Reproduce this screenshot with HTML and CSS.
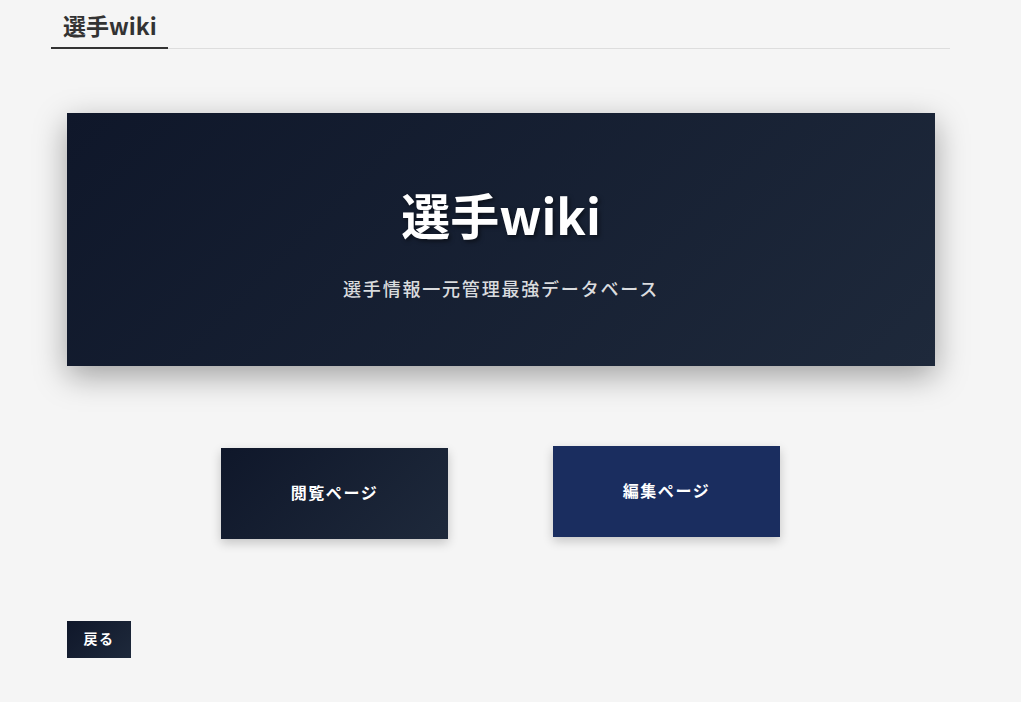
FILE: index.html
```html
<!DOCTYPE html>
<html lang="ja">
<head>
    <meta charset="UTF-8">
    <meta name="viewport" content="width=device-width, initial-scale=1.0">
    <title>選手wiki</title>
    <link rel="stylesheet" href="styles.css">
</head>
<body>
    <div class="page">
        <div class="header">
            <div class="header-tab">選手wiki</div>
        </div>

        <div class="hero">
            <h1 class="hero-title">選手wiki</h1>
            <p class="hero-sub">選手情報一元管理最強データベース</p>
        </div>

        <div class="menu">
            <a class="menu-btn view" href="#">閲覧ページ</a>
            <a class="menu-btn edit" href="#">編集ページ</a>
        </div>

        <a class="back-btn" href="#">戻る</a>
    </div>
</body>
</html>
```

FILE: styles.css
```css
body {
    margin: 0;
    background-color: #f5f5f5;
    font-family: "Noto Sans CJK JP", "Noto Sans", sans-serif;
}
.page {
    width: 899px;
    margin-left: 51px;
}
.header {
    display: flex;
    border-bottom: 1px solid #dddddd;
    height: 48px;
}
.header-tab {
    padding: 8px 12px 0;
    font-size: 23px;
    font-weight: bold;
    color: #333333;
    border-bottom: 2px solid #333333;
    margin-bottom: -1px;
    width: 93px;
    line-height: 34px;
    white-space: nowrap;
}
.hero {
    margin: 64px 15px 0 16px;
    height: 253px;
    box-sizing: border-box;
    padding-top: 71px;
    background: linear-gradient(135deg, #0f172a, #1e293b);
    box-shadow: 0 10px 30px rgba(0,0,0,0.35);
    display: flex;
    flex-direction: column;
    align-items: center;
    color: white;
}
.hero-title {
    margin: 0;
    font-size: 49px;
    font-weight: bold;
    line-height: 60px;
    text-shadow: 2px 2px 4px rgba(0,0,0,0.5);
}
.hero-sub {
    margin: 31px 0 0;
    font-size: 18px;
    font-weight: 500;
    line-height: 26px;
    letter-spacing: 1.8px;
    color: rgba(255,255,255,0.85);
}
.menu {
    display: flex;
    justify-content: center;
    align-items: flex-start;
    gap: 105px;
    margin-top: 80px;
}
.menu-btn {
    display: flex;
    align-items: center;
    justify-content: center;
    box-sizing: border-box;
    width: 227px;
    height: 91px;
    padding-bottom: 4px;
    color: white;
    text-decoration: none;
    font-size: 16px;
    font-weight: bold;
    letter-spacing: 0.1em;
    box-shadow: 0 4px 10px rgba(0,0,0,0.2);
}
.view {
    margin-top: 2px;
    background: linear-gradient(135deg, #0f172a, #1e293b);
}
.edit {
    background: #1a2d5f;
}
.back-btn {
    display: inline-flex;
    align-items: center;
    justify-content: center;
    box-sizing: border-box;
    margin: 82px 0 0 16px;
    width: 64px;
    height: 37px;
    padding-bottom: 3px;
    background: linear-gradient(135deg, #0f172a, #1e293b);
    color: white;
    text-decoration: none;
    font-size: 14px;
    font-weight: bold;
    letter-spacing: 0.1em;
}
```
